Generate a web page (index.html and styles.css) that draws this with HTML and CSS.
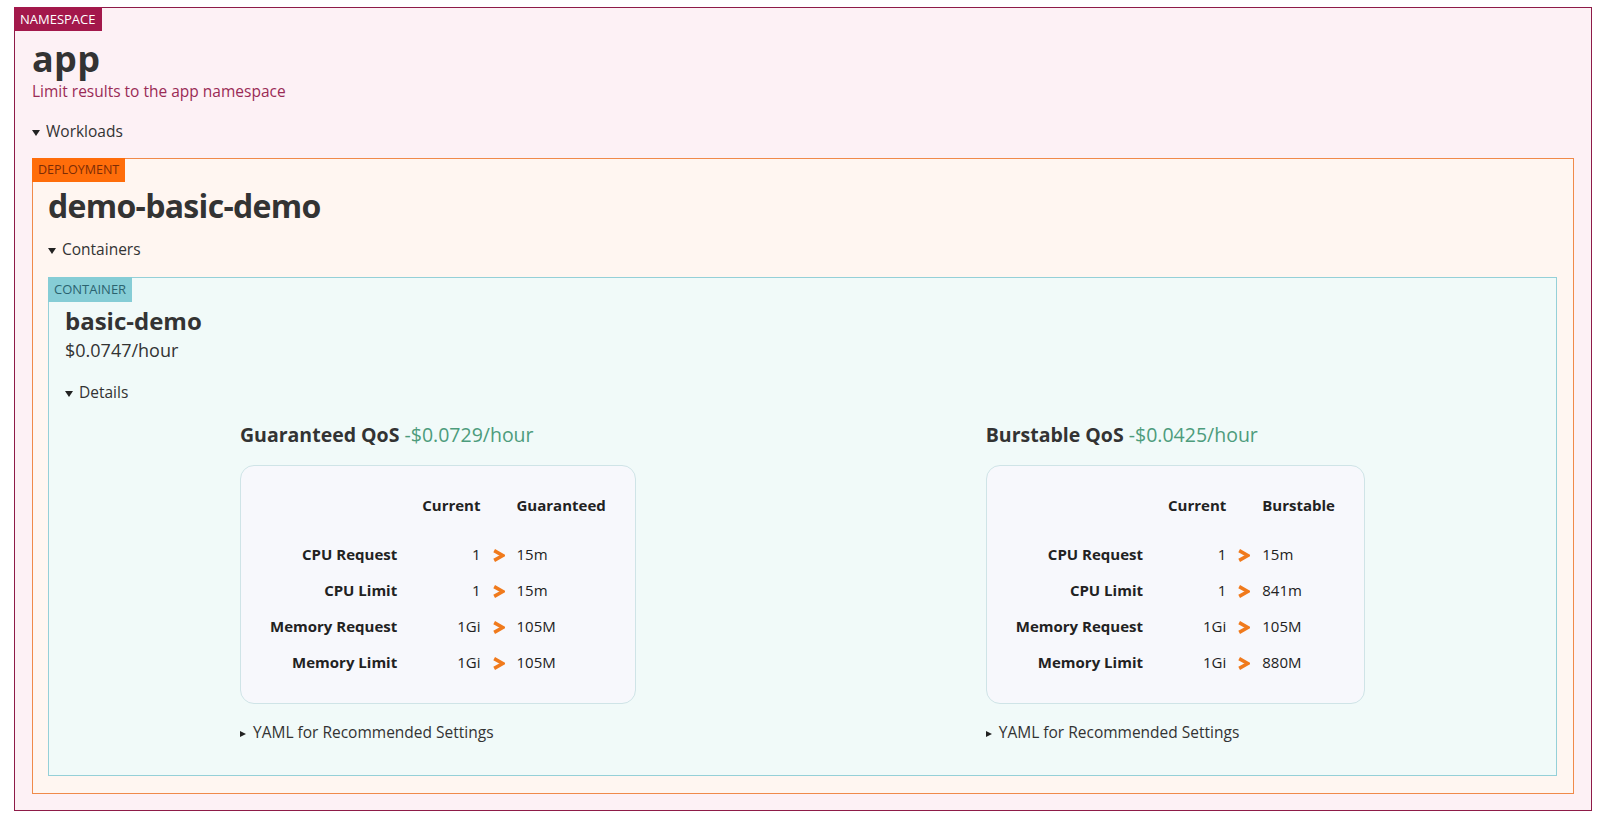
FILE: index.html
```html
<!DOCTYPE html>
<html lang="en">
<head>
<meta charset="utf-8">
<title>Goldilocks - app namespace</title>
<link rel="stylesheet" href="styles.css">
</head>
<body>
<section class="box ns">
  <div class="badge ns-badge">NAMESPACE</div>
  <h1 class="title ns-title">app</h1>
  <p class="subtitle">Limit results to the app namespace</p>
  <details class="group workloads" open>
    <summary class="toggle">Workloads</summary>
    <section class="box deploy">
      <div class="badge deploy-badge">DEPLOYMENT</div>
      <h1 class="title deploy-title">demo-basic-demo</h1>
      <details class="group containers" open>
        <summary class="toggle">Containers</summary>
        <section class="box container">
          <div class="badge container-badge">CONTAINER</div>
          <h2 class="name">basic-demo</h2>
          <div class="cost">$0.0747/hour</div>
          <details class="group details" open>
            <summary class="toggle">Details</summary>
            <div class="qos-row">
              <div class="qos">
                <h3 class="qos-title">Guaranteed QoS <span class="saving">-$0.0729/hour</span></h3>
                <div class="card">
                  <div class="grid">
                    <span class="head"></span><span class="head cur">Current</span><span class="head"></span><span class="head">Guaranteed</span>
                    <span class="label">CPU Request</span><span class="cur">1</span><span class="arrow"><svg viewBox="0 0 12 12" width="13" height="13"><polyline points="2,1.5 10,6 2,10.5"/></svg></span><span class="val">15m</span>
                    <span class="label">CPU Limit</span><span class="cur">1</span><span class="arrow"><svg viewBox="0 0 12 12" width="13" height="13"><polyline points="2,1.5 10,6 2,10.5"/></svg></span><span class="val">15m</span>
                    <span class="label">Memory Request</span><span class="cur">1Gi</span><span class="arrow"><svg viewBox="0 0 12 12" width="13" height="13"><polyline points="2,1.5 10,6 2,10.5"/></svg></span><span class="val">105M</span>
                    <span class="label">Memory Limit</span><span class="cur">1Gi</span><span class="arrow"><svg viewBox="0 0 12 12" width="13" height="13"><polyline points="2,1.5 10,6 2,10.5"/></svg></span><span class="val">105M</span>
                  </div>
                </div>
                <details class="yaml">
                  <summary class="toggle">YAML for Recommended Settings</summary>
                </details>
              </div>
              <div class="qos">
                <h3 class="qos-title">Burstable QoS <span class="saving">-$0.0425/hour</span></h3>
                <div class="card">
                  <div class="grid">
                    <span class="head"></span><span class="head cur">Current</span><span class="head"></span><span class="head">Burstable</span>
                    <span class="label">CPU Request</span><span class="cur">1</span><span class="arrow"><svg viewBox="0 0 12 12" width="13" height="13"><polyline points="2,1.5 10,6 2,10.5"/></svg></span><span class="val">15m</span>
                    <span class="label">CPU Limit</span><span class="cur">1</span><span class="arrow"><svg viewBox="0 0 12 12" width="13" height="13"><polyline points="2,1.5 10,6 2,10.5"/></svg></span><span class="val">841m</span>
                    <span class="label">Memory Request</span><span class="cur">1Gi</span><span class="arrow"><svg viewBox="0 0 12 12" width="13" height="13"><polyline points="2,1.5 10,6 2,10.5"/></svg></span><span class="val">105M</span>
                    <span class="label">Memory Limit</span><span class="cur">1Gi</span><span class="arrow"><svg viewBox="0 0 12 12" width="13" height="13"><polyline points="2,1.5 10,6 2,10.5"/></svg></span><span class="val">880M</span>
                  </div>
                </div>
                <details class="yaml">
                  <summary class="toggle">YAML for Recommended Settings</summary>
                </details>
              </div>
            </div>
          </details>
        </section>
      </details>
    </section>
  </details>
</section>
</body>
</html>
```

FILE: styles.css
```css
* { box-sizing: border-box; }

html, body { background: #ffffff; }

body {
  margin: 0;
  padding: 7px 0 0 14px;
  font-family: "Open Sans", "Noto Sans", sans-serif;
  font-size: 15.5px;
  line-height: 20px;
  color: #333333;
}

h1, h2, h3, p { margin: 0; }

.box {
  border: 1px solid;
}

.ns {
  width: 1578px;
  border-color: #8e1b48;
  background: #fdf1f5;
  padding: 0 17px 16px 17px;
}

.badge {
  display: block;
  width: fit-content;
  height: 24px;
  line-height: 24px;
  padding: 0 6px;
  font-size: 13px;
  margin: -1px 0 0 -18px;
}

.ns-badge {
  background: #a3184b;
  color: #ffffff;
}

.deploy-badge {
  background: #ff6d0a;
  color: #7c2c06;
  margin-left: -16px;
  font-size: 12.5px;
  padding: 0 6px;
}

.container-badge {
  background: #86cdd6;
  color: #2b6370;
  margin-left: -17px;
  height: 25px;
  line-height: 25px;
}

.title {
  font-size: 32px;
  line-height: 34px;
  font-weight: 700;
  color: #333333;
  letter-spacing: -0.7px;
}

.ns-title {
  margin-top: 11px;
  font-size: 36px;
  letter-spacing: 0.3px;
}

.subtitle {
  margin-top: 5px;
  color: #9a2b55;
  font-size: 15.5px;
  line-height: 20px;
}

.toggle {
  list-style: none;
  cursor: pointer;
  font-size: 15.5px;
  line-height: 20px;
  color: #333333;
}

.toggle::-webkit-details-marker { display: none; }

.toggle::before {
  content: "";
  display: inline-block;
  width: 0;
  height: 0;
  border-left: 4px solid transparent;
  border-right: 4px solid transparent;
  border-top: 6px solid #222222;
  margin-right: 6px;
  vertical-align: 1px;
}

.workloads { margin-top: 20px; }

.deploy {
  margin-top: 17px;
  border-color: #f08a4a;
  background: #fff6f1;
  padding: 0 16px 17px 15px;
}

.deploy-title { margin-top: 7px; }

.containers { margin-top: 16px; }

.container {
  margin-top: 18px;
  border-color: #95d0d8;
  background: #f1faf9;
  padding: 0 16px 33px 16px;
}

.name {
  margin-top: 5px;
  font-size: 24px;
  line-height: 28px;
  font-weight: 700;
  color: #333333;
}

.cost {
  margin-top: 3px;
  font-size: 18px;
  line-height: 24px;
  color: #333333;
}

.details { margin-top: 20px; }

.qos-row {
  display: flex;
  justify-content: space-around;
  margin-top: 20px;
}

.qos-title {
  font-size: 19.5px;
  line-height: 26px;
  font-weight: 700;
  color: #333333;
}

.saving {
  font-weight: 400;
  color: #4d9c7c;
}

.card {
  margin-top: 17px;
  background: #f7f8fc;
  border: 1px solid #cfe4e7;
  border-radius: 14px;
  padding: 21px 29px 23px 29px;
}

.grid {
  display: grid;
  grid-template-columns: auto auto auto auto;
  column-gap: 11px;
  font-size: 15px;
  line-height: 36px;
  color: #222222;
}

.head {
  font-weight: 700;
  padding-bottom: 13px;
}

.label {
  font-weight: 700;
  text-align: right;
  margin-right: 14px;
}

.cur { text-align: right; }

.arrow {
  display: flex;
  align-items: center;
  width: 14px;
  padding-top: 2px;
}

.arrow svg {
  fill: none;
  stroke: #f07a1c;
  stroke-width: 3.2;
  stroke-linecap: butt;
  stroke-linejoin: miter;
}

.val { text-align: left; }

.yaml { margin-top: 18px; }

.yaml .toggle {
  font-size: 15.5px;
  line-height: 20px;
}

.yaml .toggle::before {
  border-top: 3.5px solid transparent;
  border-bottom: 3.5px solid transparent;
  border-left: 6px solid #222222;
  border-right: 0;
  margin-right: 7px;
}
```
